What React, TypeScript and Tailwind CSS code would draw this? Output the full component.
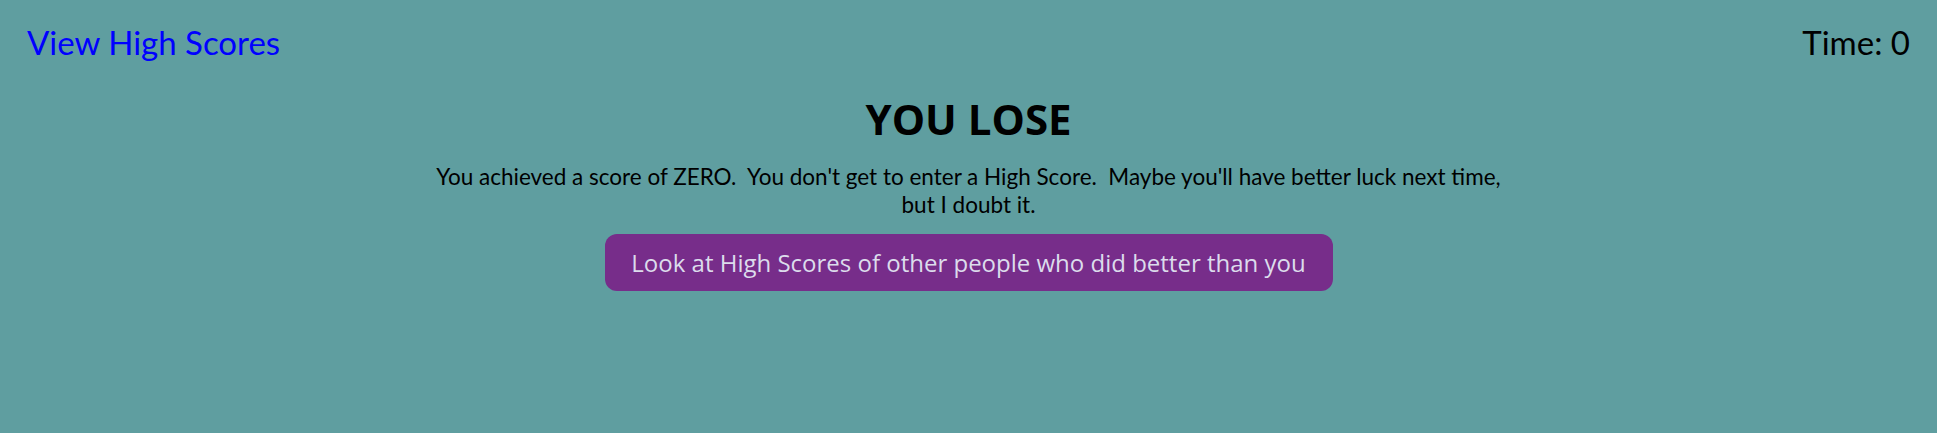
const message =
  "You achieved a score of ZERO.\u00a0 You don't get to enter a High Score.\u00a0 Maybe you'll have better luck next time, but I doubt it.";

export default function App() {
  return (
    <div className="min-h-[433px] bg-[#5f9ea0] font-['Lato','Open_Sans',sans-serif] text-black">
      <header className="flex items-start justify-between px-[27px] pt-[20px]">
        <a href="#" className="text-[33px] leading-[44px] text-[#0000ff]">
          View High Scores
        </a>
        <div className="text-[33px] leading-[44px]">Time: 0</div>
      </header>

      <main className="flex flex-col items-center">
        <h1 className="mt-[27px] font-['Open_Sans',sans-serif] text-[42px] leading-[56px] font-bold">YOU LOSE</h1>
        <p className="mt-[16px] w-[1070px] text-center text-[22.5px] leading-[28px]">{message}</p>
        <button className="mt-[15px] h-[57px] w-[728px] rounded-[12px] bg-[#772d8a] font-['Open_Sans',sans-serif] text-[24px] text-[#dcdcec]">
          Look at High Scores of other people who did better than you
        </button>
      </main>
    </div>
  );
}
